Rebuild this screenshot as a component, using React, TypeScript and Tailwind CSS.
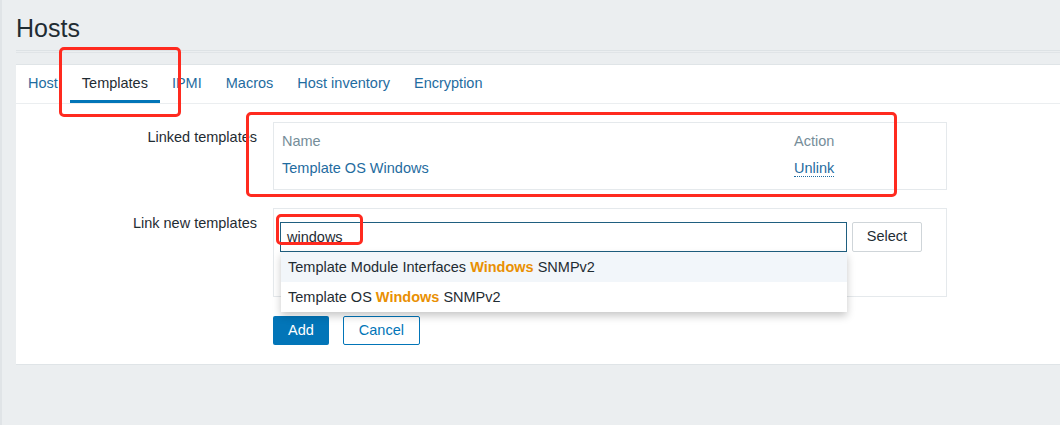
const tabs = ["Host", "Templates", "IPMI", "Macros", "Host inventory", "Encryption"];

const suggestions = [
  { before: "Template Module Interfaces ", after: " SNMPv2" },
  { before: "Template OS ", after: " SNMPv2" },
];

export default function App() {
  return (
    <div className="relative h-[425px] w-full overflow-hidden border-l-2 border-[#e0e4e7] bg-[#ebeef0] pl-[14px] font-['Liberation_Sans',Arial,sans-serif] text-[14.5px] text-[#1f2c33]">
      <div className="border-b border-[#dde2e5] pb-2 pt-[14px]">
        <h1 className="text-[25px] font-normal leading-[28px]">Hosts</h1>
      </div>
      <div className="mt-px h-px bg-[#e0e4e7]" />

      <div className="mt-[11px] border-y border-[#dfe4e7] bg-white pb-[19px]">
        {/* tabs */}
        <div className="flex border-b border-[#ebeef0]">
          {tabs.map((tab) => (
            <div
              key={tab}
              className={
                tab === "Templates"
                  ? "border-b-[3px] border-[#0275b8] px-3 pb-[9px] pt-[10px] leading-4 text-[#1f2c33]"
                  : "border-b-[3px] border-transparent px-3 pb-[9px] pt-[10px] leading-4 text-[#1f6ca0]"
              }
            >
              {tab}
            </div>
          ))}
        </div>

        {/* linked templates */}
        <div className="flex pt-[18px]">
          <div className="w-[241px] pt-[7px] text-right leading-4">Linked templates</div>
          <div className="ml-4 w-[674px] border border-[#e5e9ec] px-2 pb-[13px] pt-[10px] leading-4">
            <div className="grid grid-cols-[512px_1fr] text-[#768d99]">
              <span>Name</span>
              <span>Action</span>
            </div>
            <div className="mt-[11px] grid grid-cols-[512px_1fr]">
              <span className="text-[#1f6ca0]">Template OS Windows</span>
              <span>
                <span className="border-b border-dotted border-[#1f6ca0] text-[#1f6ca0]">Unlink</span>
              </span>
            </div>
          </div>
        </div>

        {/* link new templates */}
        <div className="mt-[18px] flex">
          <div className="w-[241px] pt-[7px] text-right leading-4">Link new templates</div>
          <div className="ml-4 h-[89px] w-[674px] border border-[#e5e9ec] pl-[6px] pt-[13px]">
            <div className="flex">
              <div className="relative">
                <div className="flex h-[30px] w-[567px] items-center border border-[#1f5f80] pl-[6px] leading-4">
                  windows
                </div>
                <div className="absolute left-px top-full z-10 w-[566px] bg-white shadow-[0_4px_8px_rgba(0,0,0,0.22)]">
                  {suggestions.map((s, i) => (
                    <div
                      key={i}
                      className={
                        i === 0
                          ? "h-[30px] bg-[#f2f6fa] pl-[7px] leading-[30px]"
                          : "h-[30px] bg-white pl-[7px] leading-[30px]"
                      }
                    >
                      {s.before}
                      <span className="font-bold text-[#e99003]">Windows</span>
                      {s.after}
                    </div>
                  ))}
                </div>
              </div>
              <button className="ml-[5px] h-[30px] w-[70px] rounded-[2px] border border-[#cfd5d9] bg-white text-[#1f2c33]">
                Select
              </button>
            </div>
          </div>
        </div>

        {/* buttons */}
        <div className="mt-[19px] flex pl-[257px]">
          <button className="h-[29px] rounded-[2px] bg-[#0275b8] px-[15px] text-white">Add</button>
          <button className="ml-[14px] h-[29px] rounded-[2px] border border-[#0275b8] bg-white px-[15px] text-[#0275b8]">
            Cancel
          </button>
        </div>
      </div>

      {/* annotation boxes */}
      <div className="absolute left-[57px] top-[47px] h-[70px] w-[122px] rounded-[5px] border-[3px] border-[#ff2a1f]" />
      <div className="absolute left-[244px] top-[112px] h-[85px] w-[651px] rounded-[5px] border-[3px] border-[#ff2a1f]" />
      <div className="absolute left-[274px] top-[214px] z-20 h-[31px] w-[87px] rounded-[5px] border-[3px] border-[#ff2a1f]" />
    </div>
  );
}
